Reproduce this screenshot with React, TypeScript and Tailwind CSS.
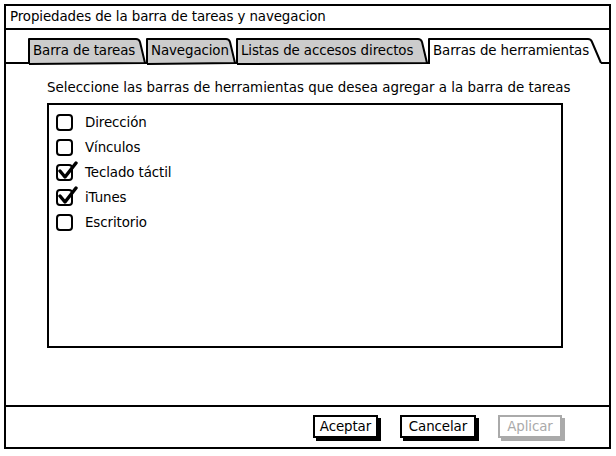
import React from "react";

const tabs = [
  { label: "Barra de tareas", width: 118, cls: "w-[118px]", active: false },
  { label: "Navegacion", width: 90, cls: "w-[90px]", active: false },
  { label: "Listas de accesos directos", width: 192, cls: "w-[192px]", active: false },
  { label: "Barras de herramientas", width: 174, cls: "w-[174px]", active: true },
];

const items = [
  { label: "Dirección", checked: false },
  { label: "Vínculos", checked: false },
  { label: "Teclado táctil", checked: true },
  { label: "iTunes", checked: true },
  { label: "Escritorio", checked: false },
];

function TabShape({ width, active }: { width: number; active: boolean }) {
  const h = 26;
  const s = active ? 11 : 7;
  const top = `M1,${h} L1,1 L${width - s - 3},1 Q${width - s},1 ${width - s + 1},4 L${width - 1},${h - 1}`;
  return (
    <svg className="absolute left-0 top-0" width={width} height={h + 2}>
      <path
        d={active ? `${top} L${width - 1},${h + 2} L1,${h + 2} Z` : `${top} L1,${h} Z`}
        fill={active ? "#ffffff" : "#cccccc"}
        stroke="none"
      />
      <path d={active ? top : `${top} L1,${h}`} fill="none" stroke="#000" strokeWidth={2} strokeLinejoin="round" />
    </svg>
  );
}

function Check({ checked }: { checked: boolean }) {
  return (
    <span className="relative block h-[17px] w-[17px] shrink-0 rounded-[4px] border-2 border-black bg-white">
      {checked && (
        <svg className="absolute -left-[1px] -top-[6px]" width="21" height="21" viewBox="0 0 21 21">
          <path d="M3,11 L8,17 L19,3" fill="none" stroke="#000" strokeWidth={3.4} strokeLinecap="round" strokeLinejoin="round" />
        </svg>
      )}
    </span>
  );
}

export default function App() {
  return (
    <div className="h-[456px] w-[616px] bg-white pl-[4px] pt-[4px] font-['DejaVu_Sans',sans-serif] text-[13.4px] tracking-[-0.1px] text-black">
      <div className="flex h-[445px] w-[607px] flex-col border-2 border-black">
        <div className="flex h-[24px] items-center border-b-2 border-black px-[4px]">
          Propiedades de la barra de tareas y navegacion
        </div>

        <div className="flex h-[34px] items-end border-b-2 border-black pl-[22px]">
          {tabs.map((t) => (
            <div key={t.label} className={`relative -mb-[2px] h-[26px] shrink-0 ${t.cls}`}>
              <TabShape width={t.width} active={t.active} />
              <span className="relative block whitespace-nowrap pl-[5px] pt-[5px] leading-[16px]">{t.label}</span>
            </div>
          ))}
        </div>

        <div className="flex flex-1 flex-col px-[41px] pt-[16px]">
          <p className="whitespace-nowrap leading-[16px] tracking-normal">
            Seleccione las barras de herramientas que desea agregar a la barra de tareas
          </p>
          <div className="mt-[7px] flex h-[245px] w-[516px] flex-col gap-[8px] border-2 border-black px-[7px] pt-[9px]">
            {items.map((it) => (
              <div key={it.label} className="flex h-[17px] items-center gap-[12px]">
                <Check checked={it.checked} />
                <span className="leading-[16px]">{it.label}</span>
              </div>
            ))}
          </div>
        </div>

        <div className="flex h-[42px] items-start justify-end gap-[22px] border-t-2 border-black pr-[47px] pt-[8px]">
          <button className="h-[23px] w-[65px] border-2 border-black bg-white shadow-[3px_3px_0_#000]">Aceptar</button>
          <button className="h-[23px] w-[76px] border-2 border-black bg-white shadow-[3px_3px_0_#000]">Cancelar</button>
          <button className="h-[23px] w-[64px] border-2 border-[#aaaaaa] bg-white text-[#aaaaaa] shadow-[3px_3px_0_#aaaaaa]">
            Aplicar
          </button>
        </div>
      </div>
    </div>
  );
}
